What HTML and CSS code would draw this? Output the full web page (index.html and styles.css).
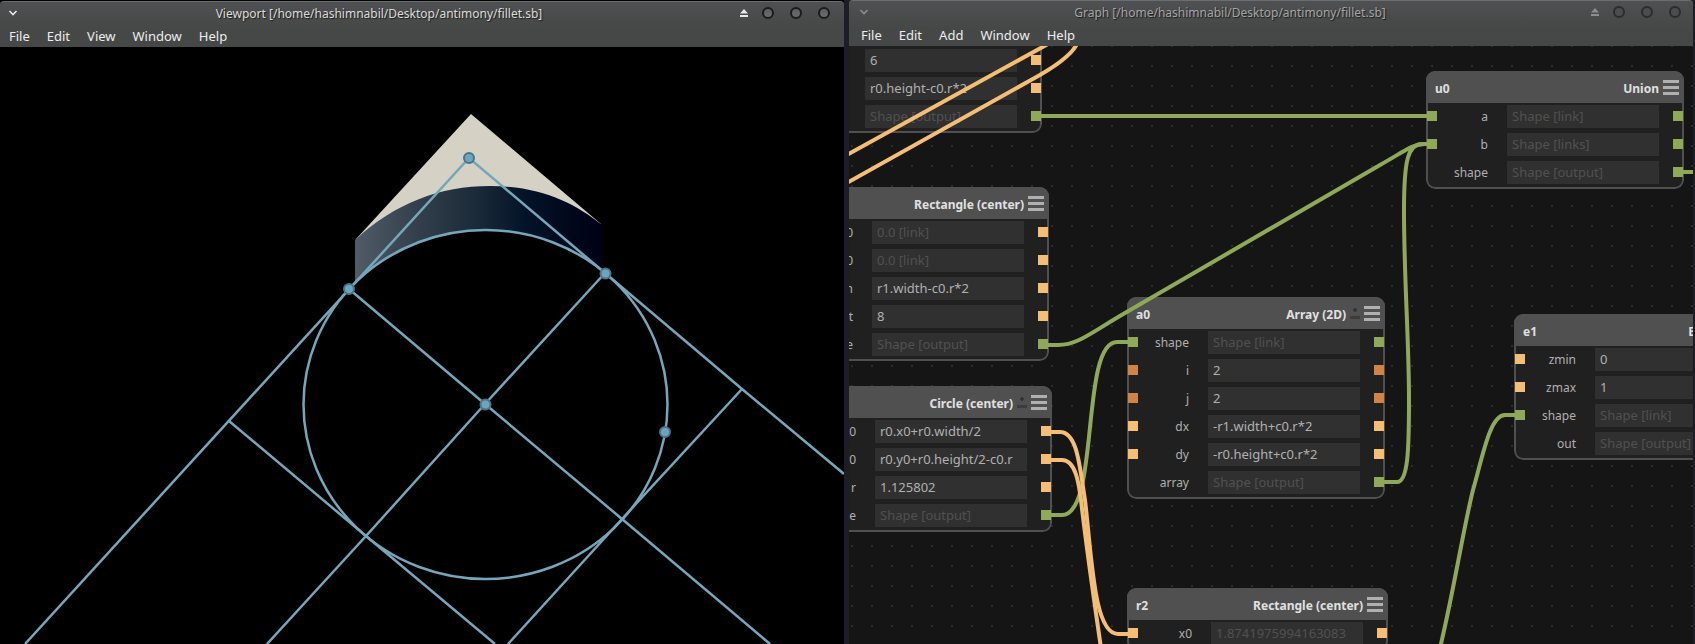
FILE: index.html
```html
<!DOCTYPE html>
<html lang="en">
<head>
<meta charset="utf-8">
<title>Antimony - fillet.sb</title>
<link rel="stylesheet" href="styles.css">
</head>
<body>
<main class="desktop">
  <section class="window window-active" aria-label="Viewport">
    <header class="chrome">
      <div class="titlebar">
        <button class="tool" aria-label="Window menu"><svg width="10" height="8" viewBox="0 0 10 8"><path d="M1.500 2 5 5.500 8.500 2" fill="none" stroke="currentColor" stroke-width="1.600"/></svg></button>
        <h1 class="title">Viewport [/home/hashimnabil/Desktop/antimony/fillet.sb]</h1>
        <div class="controls">
          <button class="tool" aria-label="Shade"><svg width="10" height="10" viewBox="0 0 10 10"><path d="M5 1 9 5.500H1zM1 7h8v2H1z" fill="currentColor"/></svg></button>
          <button class="knob" aria-label="Minimize"></button>
          <button class="knob" aria-label="Maximize"></button>
          <button class="knob" aria-label="Close"></button>
        </div>
      </div>
      <nav class="menu">
        <button>File</button><button>Edit</button><button>View</button><button>Window</button><button>Help</button>
      </nav>
    </header>
    <div class="viewport">
      <svg class="scene" role="img" aria-label="Fillet shape">
        <defs>
          <linearGradient id="band" gradientUnits="userSpaceOnUse" x1="355" y1="0" x2="603" y2="0">
            <stop offset="0" stop-color="#525c69"/>
            <stop offset="0.250" stop-color="#333f4c"/>
            <stop offset="0.500" stop-color="#1a2938"/>
            <stop offset="0.700" stop-color="#021227"/>
            <stop offset="1" stop-color="#000014"/>
          </linearGradient>
        </defs>
        <g transform="translate(0 -47)">
          <path fill="#d5d1c5" d="M471 114 356 239V250L480 200 601 224z"/>
          <path fill="url(#band)" d="M355 240C395 203 440 186 490 186S575 203 602 225V272C565 243 528 230 486 230S390 250 355 283z"/>
          <g class="guides">
            <path d="M25 644 469 158 605 273 742 389 844 474"/>
            <path d="M229 421 366 536 495 644"/>
            <path d="M742 389 622 519 508 644"/>
            <path d="M349 289 485 404 622 519 770 644"/>
            <path d="M605 273 485 404 366 536 267 644"/>
            <ellipse cx="485.500" cy="404.500" rx="182" ry="174.500"/>
          </g>
          <g class="handles">
            <circle cx="469" cy="158" r="5"/>
            <circle cx="349" cy="289" r="5"/>
            <circle cx="605.500" cy="273.500" r="5"/>
            <circle cx="485.500" cy="404.500" r="5"/>
            <circle cx="665" cy="432" r="5"/>
          </g>
        </g>
      </svg>
    </div>
  </section>

  <section class="window" aria-label="Graph">
    <header class="chrome">
      <div class="titlebar">
        <button class="tool" aria-label="Window menu"><svg width="10" height="8" viewBox="0 0 10 8"><path d="M1.500 2 5 5.500 8.500 2" fill="none" stroke="currentColor" stroke-width="1.600"/></svg></button>
        <h1 class="title">Graph [/home/hashimnabil/Desktop/antimony/fillet.sb]</h1>
        <div class="controls">
          <button class="tool" aria-label="Shade"><svg width="10" height="10" viewBox="0 0 10 10"><path d="M5 1 9 5.500H1zM1 7h8v2H1z" fill="currentColor"/></svg></button>
          <button class="knob" aria-label="Minimize"></button>
          <button class="knob" aria-label="Maximize"></button>
          <button class="knob" aria-label="Close"></button>
        </div>
      </div>
      <nav class="menu">
        <button>File</button><button>Edit</button><button>Add</button><button>Window</button><button>Help</button>
      </nav>
    </header>
    <div class="graph">
      <article class="node node-wide node-continued at-r0">
        <div class="row"><input aria-label="width" value="6"><i class="port num"></i></div>
        <div class="row"><input aria-label="height" value="r0.height-c0.r*2"><i class="port num"></i></div>
        <div class="row"><input aria-label="shape" class="dim" value="Shape [output]" readonly><i class="port shp"></i></div>
      </article>

      <article class="node node-wide at-r1">
        <header class="head"><h2>Rectangle (center)</h2><button class="burger" aria-label="Node menu"></button></header>
        <div class="row"><i></i><label for="r1x">x0</label><input id="r1x" class="dim" value="0.0 [link]" readonly><i class="port num"></i></div>
        <div class="row"><i></i><label for="r1y">y0</label><input id="r1y" class="dim" value="0.0 [link]" readonly><i class="port num"></i></div>
        <div class="row"><i></i><label for="r1w">width</label><input id="r1w" value="r1.width-c0.r*2"><i class="port num"></i></div>
        <div class="row"><i></i><label for="r1h">height</label><input id="r1h" value="8"><i class="port num"></i></div>
        <div class="row"><i></i><label for="r1s">shape</label><input id="r1s" class="dim" value="Shape [output]" readonly><i class="port shp"></i></div>
      </article>

      <article class="node at-c0">
        <header class="head"><h2>Circle (center)</h2><span class="joint"></span><button class="burger" aria-label="Node menu"></button></header>
        <div class="row"><i></i><label for="c0x">x0</label><input id="c0x" value="r0.x0+r0.width/2"><i class="port num"></i></div>
        <div class="row"><i></i><label for="c0y">y0</label><input id="c0y" value="r0.y0+r0.height/2-c0.r"><i class="port num"></i></div>
        <div class="row"><i></i><label for="c0r">r</label><input id="c0r" value="1.125802"><i class="port num"></i></div>
        <div class="row"><i></i><label for="c0s">shape</label><input id="c0s" class="dim" value="Shape [output]" readonly><i class="port shp"></i></div>
      </article>

      <article class="node at-a0">
        <header class="head"><span class="name">a0</span><h2>Array (2D)</h2><span class="joint"></span><button class="burger" aria-label="Node menu"></button></header>
        <div class="row"><i class="port shp"></i><label for="a0s">shape</label><input id="a0s" class="dim" value="Shape [link]" readonly><i class="port shp"></i></div>
        <div class="row"><i class="port int"></i><label for="a0i">i</label><input id="a0i" value="2"><i class="port int"></i></div>
        <div class="row"><i class="port int"></i><label for="a0j">j</label><input id="a0j" value="2"><i class="port int"></i></div>
        <div class="row"><i class="port num"></i><label for="a0dx">dx</label><input id="a0dx" value="-r1.width+c0.r*2"><i class="port num"></i></div>
        <div class="row"><i class="port num"></i><label for="a0dy">dy</label><input id="a0dy" value="-r0.height+c0.r*2"><i class="port num"></i></div>
        <div class="row"><i></i><label for="a0a">array</label><input id="a0a" class="dim" value="Shape [output]" readonly><i class="port shp"></i></div>
      </article>

      <article class="node at-u0">
        <header class="head"><span class="name">u0</span><h2>Union</h2><button class="burger" aria-label="Node menu"></button></header>
        <div class="row"><i class="port shp"></i><label for="u0a">a</label><input id="u0a" class="dim" value="Shape [link]" readonly><i class="port shp"></i></div>
        <div class="row"><i class="port shp"></i><label for="u0b">b</label><input id="u0b" class="dim" value="Shape [links]" readonly><i class="port shp"></i></div>
        <div class="row"><i></i><label for="u0s">shape</label><input id="u0s" class="dim" value="Shape [output]" readonly><i class="port shp"></i></div>
      </article>

      <article class="node at-e1">
        <header class="head"><span class="name">e1</span><h2>Extrude</h2><button class="burger" aria-label="Node menu"></button></header>
        <div class="row"><i class="port num"></i><label for="e1a">zmin</label><input id="e1a" value="0"><i></i></div>
        <div class="row"><i class="port num"></i><label for="e1b">zmax</label><input id="e1b" value="1"><i></i></div>
        <div class="row"><i class="port shp"></i><label for="e1s">shape</label><input id="e1s" class="dim" value="Shape [link]" readonly><i></i></div>
        <div class="row"><i></i><label for="e1o">out</label><input id="e1o" class="dim" value="Shape [output]" readonly><i></i></div>
      </article>

      <article class="node node-wide at-r2">
        <header class="head"><span class="name">r2</span><h2>Rectangle (center)</h2><button class="burger" aria-label="Node menu"></button></header>
        <div class="row"><i class="port num"></i><label for="r2x">x0</label><input id="r2x" class="dim" value="1.8741975994163083" readonly><i class="port num"></i></div>
      </article>

      <svg class="wires" aria-hidden="true">
        <g transform="translate(-849 -46)">
          <g class="wire-shp">
            <path d="M1036 116H1432"/>
            <path d="M1043 345H1058C1078 345 1092 332 1125 313L1380 165C1405 151 1412 144 1425 144H1431"/>
            <path d="M1045 515H1062C1100 515 1080 342 1117 342H1132"/>
            <path d="M1379 482H1397C1408 482 1409 450 1409 400C1409 340 1404 280 1404 210C1404 160 1408 144 1422 144H1431"/>
            <path d="M1679 172H1696"/>
            <path d="M1519 415H1505C1490 415 1483 455 1473 490C1463 530 1454 590 1440 648"/>
          </g>
          <g class="wire-num">
            <path d="M1045 432H1060C1078 432 1080 470 1085 500C1092 560 1094 634 1118 634H1132"/>
            <path d="M1045 460H1062C1076 460 1079 485 1081 500C1086 545 1094 600 1101 648"/>
            <path d="M845 156 1048 44"/>
            <path d="M845 184 1031 80C1055 67 1072 54 1077 44"/>
          </g>
        </g>
      </svg>
    </div>
  </section>
</main>
</body>
</html>
```
FILE: styles.css
```css
* { box-sizing: border-box; }

body {
  margin: 0;
  background: #1d1d26;
  font-family: "Noto Sans", sans-serif;
  font-size: 13px;
  color: #b0b0b0;
}

button, input { font: inherit; color: inherit; border: 0; padding: 0; margin: 0; background: none; }
h1, h2 { margin: 0; font-size: 12px; }

.desktop {
  display: flex;
  gap: 5px;
  height: 100vh;
  padding-right: 2px;
}

.window {
  flex: 1 1 0;
  min-width: 0;
  display: flex;
  flex-direction: column;
}

/* window frame */
.chrome {
  height: 46px;
  display: flex;
  flex-direction: column;
  border-top: 1px solid #6b6d6f;
  border-radius: 4px 4px 0 0;
  background: linear-gradient(#4e5052, #464847 60%, #454846);
  color: #8e8e8e;
}
.window-active { padding-top: 1px; background: #000; }
.window-active .chrome { color: #e8e8e8; }

.titlebar {
  height: 22px;
  display: grid;
  grid-template-columns: 40px 1fr 120px;
  align-items: center;
  padding: 0 12px 0 10px;
}
.window-active .titlebar { padding: 0 14px 0 8px; }
.title {
  font-weight: 400;
  text-align: center;
  white-space: nowrap;
  color: #a4a5a6;
  text-shadow: 1px 1px 1px #1c1c1c;
}
.window-active .title { color: #dcdcdc; }
.tool { display: flex; width: 10px; }
.tool svg { display: block; }
.controls { display: flex; justify-content: flex-end; align-items: center; }
.controls .tool { margin-right: 13px; }
.knob {
  width: 12px;
  height: 12px;
  border: 2px solid #2b2c2d;
  border-radius: 50%;
  background: #4b4d4e;
}
.knob + .knob { margin-left: 16px; }
.window-active .knob { border-color: #1b1b1b; background: linear-gradient(#5c5e60, #6a6c6e); }

.menu { display: flex; gap: 17px; padding: 2px 12px 0; color: #ededed; line-height: 20px; }
.window-active .menu { padding-left: 9px; }

/* 3D view */
.viewport { flex: 1; min-height: 0; background: #000; }
.scene { display: block; width: 100%; height: 100%; }
.guides { fill: none; stroke: #75a7ba; stroke-width: 2.5; }
.handles { fill: #6ba5c0; stroke: #4a7486; stroke-width: 2; }

/* node graph */
.graph {
  position: relative;
  flex: 1;
  min-height: 0;
  overflow: hidden;
  background: #151515 radial-gradient(circle at 1px 1px, #2c2c2c 1px, transparent 1px) 2px 19px / 20px 20px;
}
.wires { position: absolute; inset: 0; width: 100%; height: 100%; pointer-events: none; fill: none; stroke-width: 4; }
.wire-shp { stroke: #90a959; }
.wire-num { stroke: #f4bf75; }

.node {
  position: absolute;
  width: 258px;
  border-radius: 9px;
  background: #202020;
  overflow: hidden;
}
.node::after {
  content: "";
  position: absolute;
  inset: 0;
  border: 2px solid #505050;
  border-radius: 9px;
  pointer-events: none;
}
.node-wide { width: 261px; }
.node-continued { padding-top: 34px; }
.node-continued .row { justify-content: flex-end; }

.at-r0 { left: -68px; top: -31px; }
.at-r1 { left: -61px; top: 141px; }
.at-c0 { left: -55px; top: 340px; }
.at-a0 { left: 278px; top: 251px; }
.at-u0 { left: 577px; top: 25px; }
.at-e1 { left: 665px; top: 268px; }
.at-r2 { left: 278px; top: 542px; }

.head {
  height: 32px;
  margin-bottom: 2px;
  padding: 0 5px 0 9px;
  display: flex;
  align-items: center;
  gap: 4px;
  background: #505050;
  color: #e0e0e0;
  font-size: 12px;
  font-weight: 700;
}
.head h2 { margin-left: auto; white-space: nowrap; }
.head h2, .name { padding-top: 2px; }

.burger {
  width: 16px;
  height: 15px;
  border-top: 3px solid #b0b0b0;
  border-bottom: 3px solid #b0b0b0;
  background: linear-gradient(#b0b0b0, #b0b0b0) center / 100% 3px no-repeat;
}
.joint {
  width: 10px;
  height: 11px;
  border-bottom: 3px solid #3c3c3c;
  background: radial-gradient(circle at 5px 2px, #353535 2px, transparent 2px);
}

.row {
  display: flex;
  align-items: flex-start;
  height: 23px;
  margin-bottom: 5px;
  padding: 0 1px;
  line-height: 23px;
}
.row label { flex: 1; text-align: right; padding-right: 19px; font-size: 12px; }
.row input { width: 152px; height: 23px; padding: 0 5px; margin-right: 14px; background: #303030; }
.row .dim { color: #505050; }
.row i { flex: none; width: 10px; height: 10px; margin-top: 6px; position: relative; z-index: 1; }
.num { background: #f4bf75; }
.int { background: #d28445; }
.shp { background: #90a959; }

.at-e1 { width: 246px; }
.at-e1 input { width: 140px; }
```
